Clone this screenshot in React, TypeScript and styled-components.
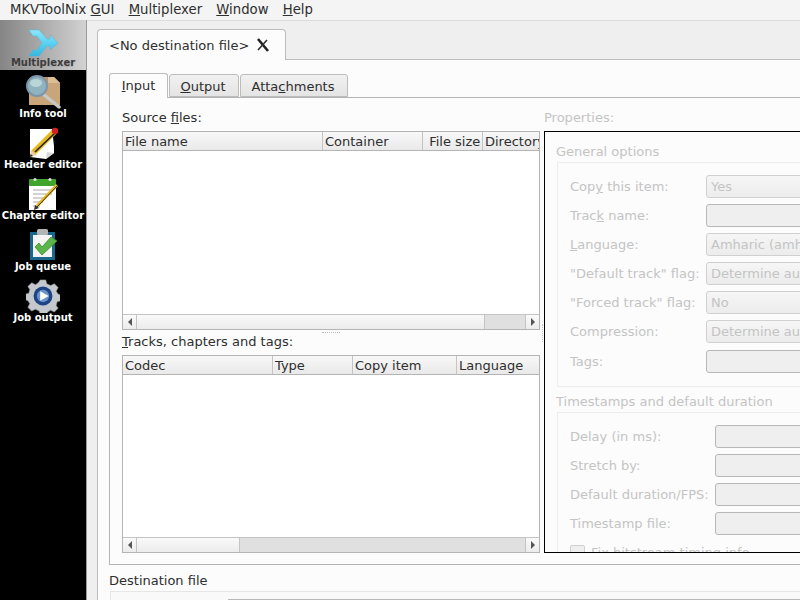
import { createGlobalStyle, styled } from 'styled-components';

const GlobalStyle = createGlobalStyle`
    html, body {
        margin: 0;
        padding: 0;
        background: #efefef;
    }
`

const Page = styled.div`
    width: 800px;
    height: 600px;
    overflow: hidden;
    font-family: "DejaVu Sans", sans-serif;
    font-size: 13px;
    color: #2e2e2e;
    display: flex;
    flex-direction: column;
    background: #efefef;
`
const MenuBar = styled.div`
    height: 20px;
    flex: none;
    display: flex;
    padding-left: 3px;
    background: #f4f4f4;
    border-bottom: 1px solid #dcdcdc;
    box-sizing: content-box;
    margin-bottom: -1px;
    font-size: 13.25px;
`
const MenuItem = styled.div`
    padding: 0 7px;
    line-height: 19px;
    margin-right: 0.2px;
`
const Body = styled.div`
    flex: 1;
    display: flex;
    min-height: 0;
`
const SideBar = styled.div`
    width: 86px;
    flex: none;
    background: #000;
    border-right: 1px solid #9a9a9a;
`
const SideItem = styled.div<{ $active?: boolean }>`
    height: ${(p) => (p.$active ? '50px' : '51px')};
    margin-bottom: ${(p) => (p.$active ? '1px' : '0')};
    display: flex;
    flex-direction: column;
    align-items: center;
    justify-content: flex-end;
    box-sizing: border-box;
    padding-bottom: ${(p) => (p.$active ? '1px' : '2px')};
    background: ${(p) => (p.$active ? 'linear-gradient(90deg, #858585, #d2d2d2)' : '#000')};
    color: ${(p) => (p.$active ? '#3c3c3c' : '#fff')};
    text-shadow: ${(p) => (p.$active ? '0 1px 1px #ababab' : 'none')};
    font-size: 10px;
    font-weight: bold;
    white-space: nowrap;
    line-height: 13px;
    svg { display: block; margin-bottom: ${(p) => (p.$active ? '-1px' : '-2px')}; }
`
const Main = styled.div`
    flex: 1;
    min-width: 0;
    padding: 9px 0 0 10px;
    display: flex;
    flex-direction: column;
`
const TabRow = styled.div`
    display: flex;
    align-items: flex-end;
    flex: none;
    position: relative;
    z-index: 1;
`
const DocTab = styled.div`
    width: 189px;
    height: 31px;
    box-sizing: border-box;
    display: flex;
    align-items: center;
    gap: 7px;
    padding: 0 0 0 11px;
    background: #fcfcfc;
    border: 1px solid #bcbcbc;
    border-bottom: none;
    border-radius: 4px 4px 0 0;
    margin-bottom: -1px;
`
const DocPane = styled.div`
    flex: 1;
    width: 760px;
    background: #fcfcfc;
    border: 1px solid #bcbcbc;
    padding: 13px 0 0 11px;
    display: flex;
    flex-direction: column;
`
const InnerTab = styled.div<{ $active?: boolean; $w: number }>`
    width: ${(p) => p.$w}px;
    height: ${(p) => (p.$active ? '25px' : '23px')};
    box-sizing: border-box;
    text-align: center;
    padding-right: ${(p) => (p.$active ? '0' : '2px')};
    line-height: ${(p) => (p.$active ? '24px' : '23px')};
    background: ${(p) => (p.$active ? '#fcfcfc' : 'linear-gradient(#f1f1f1, #e4e4e4)')};
    border: 1px solid #bcbcbc;
    border-bottom: ${(p) => (p.$active ? 'none' : '1px solid #bcbcbc')};
    border-radius: 3px 3px 0 0;
    margin-right: 1px;
    margin-bottom: ${(p) => (p.$active ? '-1px' : '0')};
`
const InputPane = styled.div`
    flex: none;
    height: 468px;
    width: 720px;
    box-sizing: border-box;
    border: 1px solid #b4b4b4;
    padding: 12px 0 12px 12px;
    display: flex;
    overflow: hidden;
`
const LeftCol = styled.div`
    width: 418px;
    flex: none;
    display: flex;
    flex-direction: column;
`
const Label = styled.div`
    height: 21px;
    line-height: 15px;
    flex: none;
`
const Table = styled.div<{ $h: number }>`
    height: ${(p) => p.$h}px;
    flex: none;
    box-sizing: border-box;
    border: 1px solid #b4b4b4;
    background: #fff;
    display: flex;
    flex-direction: column;
`
const HeaderRow = styled.div`
    display: flex;
    height: 19px;
    box-sizing: border-box;
    flex: none;
    border-bottom: 1px solid #b4b4b4;
    background: linear-gradient(#f8f8f8, #e9e9e9);
`
const HeaderCell = styled.div<{ $w: number }>`
    width: ${(p) => p.$w}px;
    flex: none;
    box-sizing: border-box;
    padding: 2px 0 0 2px;
    line-height: 16px;
    border-right: 1px solid #c4c4c4;
    white-space: nowrap;
    overflow: hidden;
    &:last-child { border-right: none; flex: 1; }
`
const TableBody = styled.div`
    flex: 1;
`
const ScrollBar = styled.div`
    height: 14px;
    flex: none;
    display: flex;
    border-top: 1px solid #c4c4c4;
    background: #e0e0e0;
`
const ScrollBtn = styled.div<{ $dir: 'left' | 'right' }>`
    width: 13px;
    flex: none;
    background: linear-gradient(#fafafa, #ececec);
    border-${(p) => (p.$dir === 'left' ? 'right' : 'left')}: 1px solid #c4c4c4;
    margin-left: ${(p) => (p.$dir === 'right' ? 'auto' : '0')};
    display: flex;
    align-items: center;
    justify-content: center;
    &::before {
        content: "";
        border-top: 4px solid transparent;
        border-bottom: 4px solid transparent;
        border-${(p) => (p.$dir === 'left' ? 'right' : 'left')}: 4px solid #555;
    }
`
const ScrollThumb = styled.div<{ $w: number }>`
    width: ${(p) => p.$w}px;
    flex: none;
    box-sizing: border-box;
    background: linear-gradient(#f9f9f9, #ececec);
    border-right: 1px solid #c4c4c4;
`
const HSplit = styled.div`
    height: 4px;
    flex: none;
    display: flex;
    justify-content: center;
    align-items: center;
    &::before {
        content: "";
        width: 18px;
        border-top: 1px dotted #b8b8b8;
    }
`
const VSplit = styled.div`
    width: 4px;
    flex: none;
    display: flex;
    align-items: center;
    justify-content: center;
    margin-top: 214px;
    height: 18px;
    &::before {
        content: "";
        height: 18px;
        border-left: 1px dotted #c4c4c4;
    }
`
const RightCol = styled.div`
    flex: 1;
    min-width: 0;
    display: flex;
    flex-direction: column;
`
const DimLabel = styled(Label)`
    color: #c4c4c4;
`
const PropsBox = styled.div`
    height: 422px;
    flex: none;
    box-sizing: border-box;
    border: 1px solid #000;
    border-right: none;
    background: #fcfcfc;
    overflow: hidden;
    padding: 12px 0 0 11px;
    color: #c4c4c4;
`
const GroupTitle = styled.div`
    height: 18px;
    line-height: 15px;
`
const Group = styled.div<{ $mb?: number }>`
    border: 1px solid #ececec;
    border-right: none;
    margin-left: 1px;
    margin-bottom: ${(p) => p.$mb ?? 0}px;
    padding: 12px 0 0 12px;
    height: ${(p) => (p.$mb ? '225px' : 'auto')};
    box-sizing: border-box;
`
const FormRow = styled.div<{ $col: number }>`
    display: grid;
    grid-template-columns: ${(p) => p.$col}px 120px;
    align-items: center;
    height: 23px;
    margin-bottom: 6px;
    &:last-child { margin-top: 7px; }
`
const Field = styled.div<{ $edit?: boolean }>`
    height: 23px;
    box-sizing: border-box;
    border: 1px solid ${(p) => (p.$edit ? '#b8b8b8' : '#d0d0d0')};
    border-radius: 3px;
    background: ${(p) => (p.$edit ? '#efefef' : 'linear-gradient(#f6f6f6, #ececec)')};
    padding-left: 4px;
    line-height: 21px;
    white-space: nowrap;
    overflow: hidden;
`
const CheckRow = styled.div`
    display: flex;
    align-items: center;
    gap: 6px;
    margin-top: 10px;
`
const CheckBox = styled.div`
    width: 13px;
    height: 13px;
    border: 1px solid #d0d0d0;
    border-radius: 2px;
    background: #efefef;
`
const DestTitle = styled.div`
    height: 26px;
    flex: none;
    padding-top: 8px;
    box-sizing: border-box;
    line-height: 16px;
`
const DestBox = styled.div`
    flex: 1;
    margin-left: 1px;
    border: 1px solid #e6e6e6;
    border-bottom: none;
    background: #f9f9f9;
    padding: 7px 0 0 117px;
`
const DestField = styled.div`
    height: 10px;
    border-top: 1px solid #b8b8b8;
`

const MuxIcon = () => (
    <svg width="32" height="28" viewBox="0 0 32 28">
        <defs>
            <linearGradient id="mux" x1="0" y1="0" x2="0" y2="1">
                <stop offset="0" stopColor="#8fe6fa" />
                <stop offset="0.5" stopColor="#5cd2f2" />
                <stop offset="1" stopColor="#36b6e0" />
            </linearGradient>
        </defs>
        <polygon points="2,1 12,1 20,10 23,10 23,6 31,14 23,21 23,17 20,17 12,27 2,27 6,21 10,21 15,14 10,7 6,7" fill="url(#mux)" stroke="#4ab8d8" strokeWidth="0.5" />
    </svg>
)

const InfoIcon = () => (
    <svg width="36" height="34" viewBox="0 0 36 34">
        <polygon points="8,2 29,2 35,8 35,30 4,30 4,8" fill="#c9a57a" />
        <polygon points="8,2 29,2 35,8 4,8" fill="#dcbd97" />
        <rect x="18" y="2" width="5" height="6" fill="#b8926a" />
        <line x1="18" y1="19" x2="34" y2="32" stroke="#c8c8c8" strokeWidth="3.5" strokeLinecap="round" />
        <circle cx="12" cy="11" r="10" fill="#8fb4c0" stroke="#7d95a8" strokeWidth="2" />
        <ellipse cx="11" cy="8" rx="6" ry="4" fill="#b9d6d8" />
    </svg>
)

const HeaderIcon = () => (
    <svg width="34" height="34" viewBox="0 0 34 34">
        <polygon points="4,3 26,3 28,20 28,27 20,33 4,31" fill="#fff" />
        <polygon points="20,33 28,27 21,26" fill="#d8d8d8" />
        <line x1="7" y1="27" x2="28" y2="6" stroke="#e8b81c" strokeWidth="6" />
        <line x1="9" y1="26" x2="29" y2="7" stroke="#222" strokeWidth="1.6" />
        <polygon points="4,31 5,24 11,29" fill="#e9cfa4" />
        <polygon points="4,31 4.5,28 7,30" fill="#222" />
        <circle cx="29" cy="5" r="3.2" fill="#d02424" />
    </svg>
)

const ChapterIcon = () => (
    <svg width="34" height="34" viewBox="0 0 34 34">
        <rect x="3" y="4" width="27" height="29" fill="#fff" />
        <rect x="3" y="2" width="27" height="7" rx="1" fill="#3fa52c" />
        <circle cx="9" cy="2.5" r="1.6" fill="#ddd" />
        <circle cx="24" cy="2.5" r="1.6" fill="#ddd" />
        <path d="M7 13h19M7 17h19M7 21h13M7 25h10M7 29h7" stroke="#a8a8a8" strokeWidth="1" />
        <line x1="11" y1="29" x2="31" y2="8" stroke="#e8b81c" strokeWidth="3.2" />
        <line x1="11" y1="30" x2="32" y2="8" stroke="#222" strokeWidth="0.9" />
        <polygon points="8,33 9,28 13,31" fill="#333" />
    </svg>
)

const QueueIcon = () => (
    <svg width="32" height="34" viewBox="0 0 32 34">
        <rect x="3" y="4" width="25" height="28" fill="#17688c" />
        <rect x="6" y="7" width="19" height="22" fill="#f4f4f4" />
        <rect x="10" y="1" width="11" height="6" rx="1.5" fill="#b4b4b4" />
        <polygon points="8,19 12,15 15,19 24,9 30,13 15,27" fill="#5cb548" stroke="#3a8c2c" strokeWidth="0.8" />
    </svg>
)

const OutputIcon = () => (
    <svg width="34" height="34" viewBox="0 0 36 36">
        <path d="M15 1h6l1 4 4 2 4-2 4 4-2 4 2 3 3 1v6l-4 1-1 4 2 3-4 4-4-2-3 2-2 3h-6l-1-4-4-2-4 2-4-4 2-4-2-3-3-1v-6l4-1 1-4-2-3 4-4 4 2 3-2z" fill="#c4c8cc" stroke="#8f9499" strokeWidth="0.6" />
        <circle cx="18" cy="18" r="10" fill="#1d4585" />
        <circle cx="18" cy="18" r="6.5" fill="#6b93c8" />
        <polygon points="15,13 24,18 15,23" fill="#fff" />
    </svg>
)

const CloseIcon = () => (
    <svg width="14" height="14" viewBox="0 0 14 14">
        <path d="M2 1 L12 13" stroke="#222" strokeWidth="2.6" />
        <path d="M11 2 L2 12" stroke="#333" strokeWidth="1.6" />
    </svg>
)

const tools = [
    { name: 'Info tool', icon: <InfoIcon /> },
    { name: 'Header editor', icon: <HeaderIcon /> },
    { name: 'Chapter editor', icon: <ChapterIcon /> },
    { name: 'Job queue', icon: <QueueIcon /> },
    { name: 'Job output', icon: <OutputIcon /> },
]

const fileCols = [{ t: 'File name', w: 200 }, { t: 'Container', w: 100 }, { t: 'File size', w: 60, pad: true }, { t: 'Directory', w: 57 }]
const trackCols = [{ t: 'Codec', w: 150 }, { t: 'Type', w: 80 }, { t: 'Copy item', w: 104 }, { t: 'Language', w: 83 }]

function Scroll({ thumb }: { thumb: number }) {
    return (
        <ScrollBar>
            <ScrollBtn $dir="left" />
            <ScrollThumb $w={thumb} />
            <ScrollBtn $dir="right" />
        </ScrollBar>
    )
}

function App() {
    return (
        <Page>
            <GlobalStyle />
            <MenuBar>
                <MenuItem>MKVToolNix <u>G</u>UI</MenuItem>
                <MenuItem><u>M</u>ultiplexer</MenuItem>
                <MenuItem><u>W</u>indow</MenuItem>
                <MenuItem><u>H</u>elp</MenuItem>
            </MenuBar>
            <Body>
                <SideBar>
                    <SideItem $active>
                        <MuxIcon />
                        Multiplexer
                    </SideItem>
                    {tools.map((tool) => (
                        <SideItem key={tool.name}>
                            {tool.icon}
                            {tool.name}
                        </SideItem>
                    ))}
                </SideBar>
                <Main>
                    <TabRow>
                        <DocTab>
                            &lt;No destination file&gt;
                            <CloseIcon />
                        </DocTab>
                    </TabRow>
                    <DocPane>
                        <TabRow>
                            <InnerTab $active $w={59}><u>I</u>nput</InnerTab>
                            <InnerTab $w={70}><u>O</u>utput</InnerTab>
                            <InnerTab $w={108}>Atta<u>c</u>hments</InnerTab>
                        </TabRow>
                        <InputPane>
                            <LeftCol>
                                <Label>Source <u>f</u>iles:</Label>
                                <Table $h={199}>
                                    <HeaderRow>
                                        {fileCols.map((c) => (
                                            <HeaderCell key={c.t} $w={c.w}>{c.pad ? <>&nbsp;{c.t}</> : c.t}</HeaderCell>
                                        ))}
                                    </HeaderRow>
                                    <TableBody />
                                    <Scroll thumb={348} />
                                </Table>
                                <HSplit />
                                <Label><u>T</u>racks, chapters and tags:</Label>
                                <Table $h={198}>
                                    <HeaderRow>
                                        {trackCols.map((c) => (
                                            <HeaderCell key={c.t} $w={c.w}>{c.t}</HeaderCell>
                                        ))}
                                    </HeaderRow>
                                    <TableBody />
                                    <Scroll thumb={103} />
                                </Table>
                            </LeftCol>
                            <VSplit />
                            <RightCol>
                                <DimLabel>Properties:</DimLabel>
                                <PropsBox>
                                    <GroupTitle>General options</GroupTitle>
                                    <Group $mb={7}>
                                        <FormRow $col={136}><span>Cop<u>y</u> this item:</span><Field>Yes</Field></FormRow>
                                        <FormRow $col={136}><span>Trac<u>k</u> name:</span><Field $edit /></FormRow>
                                        <FormRow $col={136}><span><u>L</u>anguage:</span><Field>Amharic (amh)</Field></FormRow>
                                        <FormRow $col={136}><span>"Default track" flag:</span><Field>Determine auto</Field></FormRow>
                                        <FormRow $col={136}><span>"Forced track" flag:</span><Field>No</Field></FormRow>
                                        <FormRow $col={136}><span>Compression:</span><Field>Determine auto</Field></FormRow>
                                        <FormRow $col={136}><span>Tags:</span><Field $edit /></FormRow>
                                    </Group>
                                    <GroupTitle>Timestamps and default duration</GroupTitle>
                                    <Group>
                                        <FormRow $col={145}><span>Delay (in ms):</span><Field $edit /></FormRow>
                                        <FormRow $col={145}><span>Stretch by:</span><Field $edit /></FormRow>
                                        <FormRow $col={145}><span>Default duration/FPS:</span><Field $edit /></FormRow>
                                        <FormRow $col={145}><span>Timestamp file:</span><Field $edit /></FormRow>
                                        <CheckRow><CheckBox />Fix bitstream timing info</CheckRow>
                                    </Group>
                                </PropsBox>
                            </RightCol>
                        </InputPane>
                        <DestTitle>Destination file</DestTitle>
                        <DestBox>
                            <DestField />
                        </DestBox>
                    </DocPane>
                </Main>
            </Body>
        </Page>
    )
}

export default App;
